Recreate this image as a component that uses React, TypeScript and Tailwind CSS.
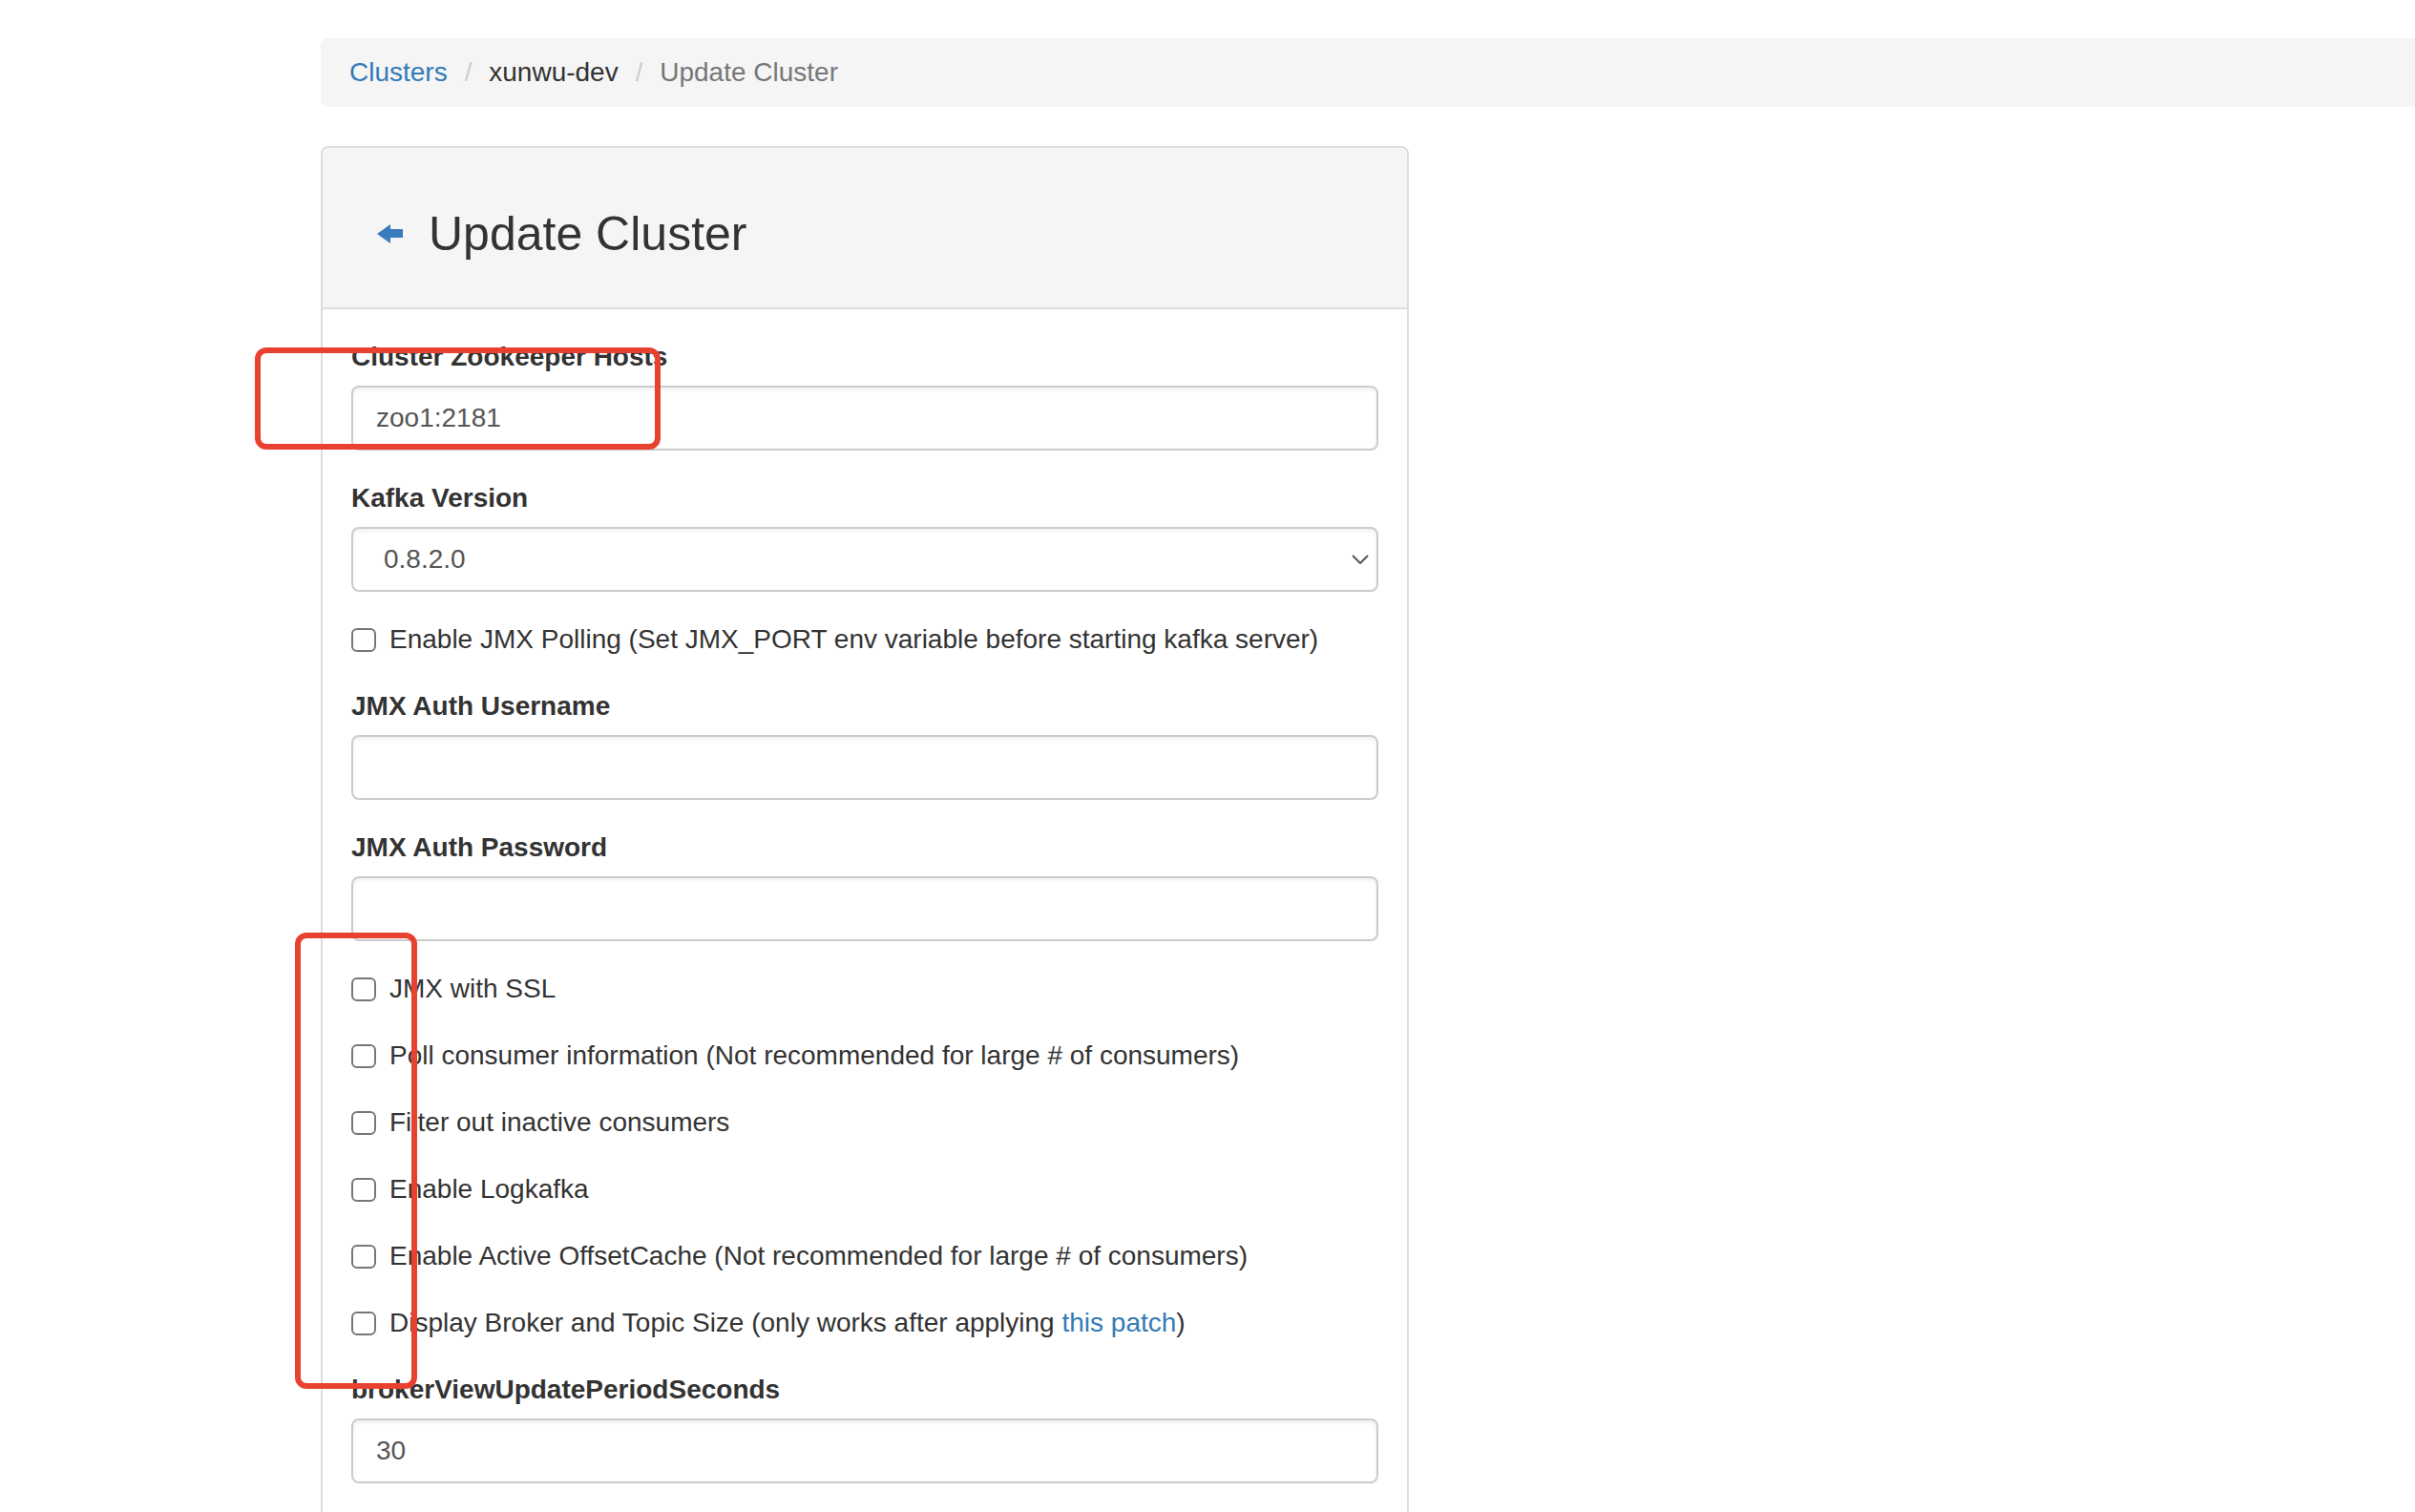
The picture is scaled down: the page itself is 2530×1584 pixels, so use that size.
import React from 'react'

const Label = ({ children }: { children: React.ReactNode }) => (
  <label className="block font-bold text-[28px] leading-[40px] mb-[10px] text-[#333]">{children}</label>
)

const TextInput = ({ value }: { value?: string }) => (
  <div className="h-[68px] border-2 border-[#ccc] rounded-[8px] bg-white px-[24px] flex items-center text-[28px] text-[#555] shadow-[inset_0_2px_4px_rgba(0,0,0,0.075)]">
    {value}
  </div>
)

const Check = ({ children }: { children: React.ReactNode }) => (
  <div className="h-[40px] mb-[30px] flex items-center text-[28px] text-[#333]">
    <span className="w-[26px] h-[25px] border-2 border-[#777] rounded-[6px] bg-white shrink-0" />
    <span className="ml-[14px] whitespace-nowrap">{children}</span>
  </div>
)

const Sep = () => <span className="ml-[8px] px-[10px] text-[#ccc]">/{'\u00a0'}</span>

const App = () => {
  return (
    <div className="relative w-[2530px] h-[1584px] overflow-hidden bg-white font-['Liberation_Sans',Arial,sans-serif] text-[#333]">
      <div className="pl-[336px] pt-[40px]">
        {/* breadcrumb */}
        <div className="w-[2300px] h-[72px] bg-[#f5f5f5] rounded-[8px] px-[30px] py-[16px] text-[28px] leading-[40px] flex items-center">
          <span className="text-[#337ab7]">Clusters</span>
          <Sep />
          <span className="text-[#333]">xunwu-dev</span>
          <Sep />
          <span className="text-[#777]">Update Cluster</span>
        </div>

        {/* panel */}
        <div className="mt-[41px] w-[1140px] border-2 border-[#ddd] rounded-[8px] bg-white">
          <div className="h-[169px] bg-[#f5f5f5] border-b-2 border-[#ddd] rounded-t-[8px] pt-[12px] pl-[57px] flex items-center">
            <svg width="28" height="20" viewBox="0 0 28 20" className="shrink-0">
              <path d="M0 10 L14 0 L14 5 L27 5 L27 14 L14 14 L14 20 Z" fill="#3a7bbf" />
            </svg>
            <span className="ml-[26px] text-[50px] leading-[56px] text-[#333]">Update Cluster</span>
          </div>

          <div className="p-[30px]">
            <div className="mb-[30px]">
              <Label>Cluster Zookeeper Hosts</Label>
              <TextInput value="zoo1:2181" />
            </div>

            <div className="mb-[30px]">
              <Label>Kafka Version</Label>
              <div className="h-[68px] border-2 border-[#ccc] rounded-[8px] bg-white pl-[32px] pr-[8px] flex items-center justify-between text-[28px] text-[#555] shadow-[inset_0_2px_4px_rgba(0,0,0,0.075)]">
                <span>0.8.2.0</span>
                <svg width="18" height="10" viewBox="0 0 18 10">
                  <path d="M1 1 L9 9 L17 1" fill="none" stroke="#555" strokeWidth="2" />
                </svg>
              </div>
            </div>

            <Check>Enable JMX Polling (Set JMX_PORT env variable before starting kafka server)</Check>

            <div className="mb-[30px]">
              <Label>JMX Auth Username</Label>
              <TextInput />
            </div>

            <div className="mb-[30px]">
              <Label>JMX Auth Password</Label>
              <TextInput />
            </div>

            <Check>JMX with SSL</Check>
            <Check>Poll consumer information (Not recommended for large # of consumers)</Check>
            <Check>Filter out inactive consumers</Check>
            <Check>Enable Logkafka</Check>
            <Check>Enable Active OffsetCache (Not recommended for large # of consumers)</Check>
            <Check>
              Display Broker and Topic Size (only works after applying <span className="text-[#337ab7]">this patch</span>)
            </Check>

            <div className="mb-[30px]">
              <Label>brokerViewUpdatePeriodSeconds</Label>
              <TextInput value="30" />
            </div>

            <div className="h-[120px]" />
          </div>
        </div>
      </div>

      {/* annotation boxes */}
      <div className="absolute left-[267px] top-[364px] w-[425px] h-[107px] border-[6px] border-[#e8412f] rounded-[12px]" />
      <div className="absolute left-[309px] top-[977px] w-[128px] h-[478px] border-[6px] border-[#e8412f] rounded-[12px]" />
    </div>
  )
}

export default App
